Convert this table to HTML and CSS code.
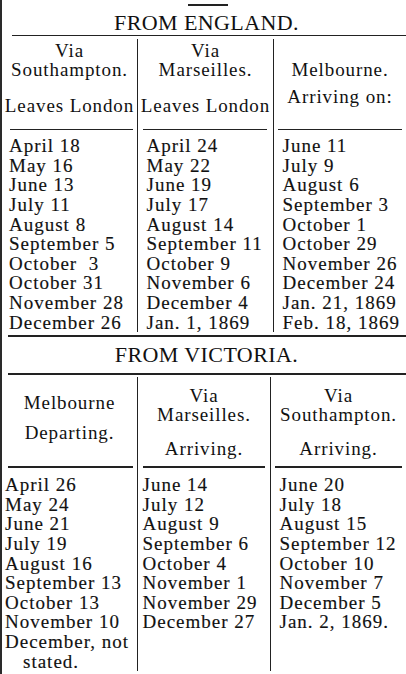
FILE: index.html
```html
<!DOCTYPE html>
<html lang="en">
<head>
<meta charset="utf-8">
<title>Mail Table 1868</title>
<link rel="stylesheet" href="styles.css">
</head>
<body>
<div class="page">
  <div class="cutoff"></div>
  <h2 class="title title-eng">FROM ENGLAND.</h2>
  <div class="rule rule-a"></div>
  <div class="table table-eng">
    <div class="col c1">
      <div class="head">
        <div class="hl pt2">Via</div>
        <div class="hl">Southampton.</div>
        <div class="hl gap17">Leaves London</div>
      </div>
      <div class="seg"></div>
      <ul class="dates">
        <li>April 18</li><li>May 16</li><li>June 13</li><li>July 11</li><li>August 8</li>
        <li>September 5</li><li>October &nbsp;3</li><li>October 31</li><li>November 28</li><li>December 26</li>
      </ul>
    </div>
    <div class="col c2">
      <div class="head">
        <div class="hl pt2">Via</div>
        <div class="hl">Marseilles.</div>
        <div class="hl gap17">Leaves London</div>
      </div>
      <div class="seg"></div>
      <ul class="dates">
        <li>April 24</li><li>May 22</li><li>June 19</li><li>July 17</li><li>August 14</li>
        <li>September 11</li><li>October 9</li><li>November 6</li><li>December 4</li><li>Jan. 1, 1869</li>
      </ul>
    </div>
    <div class="col c3">
      <div class="head">
        <div class="hl pt21">Melbourne.</div>
        <div class="hl gap8">Arriving on:</div>
      </div>
      <div class="seg"></div>
      <ul class="dates">
        <li>June 11</li><li>July 9</li><li>August 6</li><li>September 3</li><li>October 1</li>
        <li>October 29</li><li>November 26</li><li>December 24</li><li>Jan. 21, 1869</li><li>Feb. 18, 1869</li>
      </ul>
    </div>
  </div>
  <div class="rule rule-b"></div>
  <h2 class="title title-vic">FROM VICTORIA.</h2>
  <div class="rule rule-c"></div>
  <div class="table table-vic">
    <div class="col c1">
      <div class="head">
        <div class="hl pt16">Melbourne</div>
        <div class="hl gap11">Departing.</div>
      </div>
      <div class="seg"></div>
      <ul class="dates">
        <li>April 26</li><li>May 24</li><li>June 21</li><li>July 19</li><li>August 16</li>
        <li>September 13</li><li>October 13</li><li>November 10</li><li>December, not</li><li class="indent">stated.</li>
      </ul>
    </div>
    <div class="col c2">
      <div class="head">
        <div class="hl pt9">Via</div>
        <div class="hl">Marseilles.</div>
        <div class="hl gap15">Arriving.</div>
      </div>
      <div class="seg"></div>
      <ul class="dates">
        <li>June 14</li><li>July 12</li><li>August 9</li><li>September 6</li><li>October 4</li>
        <li>November 1</li><li>November 29</li><li>December 27</li>
      </ul>
    </div>
    <div class="col c3">
      <div class="head">
        <div class="hl pt9">Via</div>
        <div class="hl">Southampton.</div>
        <div class="hl gap15">Arriving.</div>
      </div>
      <div class="seg"></div>
      <ul class="dates">
        <li>June 20</li><li>July 18</li><li>August 15</li><li>September 12</li><li>October 10</li>
        <li>November 7</li><li>December 5</li><li>Jan. 2, 1869.</li>
      </ul>
    </div>
  </div>
</div>
</body>
</html>
```
FILE: styles.css
```css
html, body {
  margin: 0;
  padding: 0;
  background: #ffffff;
}

.page {
  width: 404px;
  height: 674px;
  overflow: hidden;
  border-left: 2px solid #2a2a2a;
  font-family: "Liberation Serif", "Times New Roman", serif;
  color: #111;
}

.cutoff {
  width: 40px;
  height: 1.5px;
  background: #222;
  margin: 4px 0 0 186px;
}

.title {
  margin: 5px 0 0;
  padding-left: 5px;
  font-size: 22px;
  line-height: 24px;
  font-weight: normal;
  letter-spacing: 0.4px;
  text-align: center;
}

.title-vic {
  margin-top: 6px;
}

.rule {
  height: 1.5px;
  background: #222;
}

.rule-a { margin-left: 10px; }
.rule-b { margin: 3px 0 0 6px; }
.rule-c { margin: 6.5px 0 0 6px; }

.table {
  display: grid;
  margin-top: 2.5px;
}

.table-eng { grid-template-columns: 135px 136px 133px; }
.table-vic { grid-template-columns: 135px 133px 136px; }

.col + .col {
  border-left: 1.5px solid #222;
}

.head {
  box-sizing: border-box;
  height: 90px;
}

.table-vic .head { height: 89px; }

.hl {
  font-size: 19px;
  line-height: 19px;
  letter-spacing: 0.9px;
  text-align: center;
  white-space: nowrap;
}

.pt2 { padding-top: 2px; }
.pt9 { padding-top: 9px; }
.pt16 { padding-top: 16px; }
.pt21 { padding-top: 21px; }
.gap8 { margin-top: 8px; }
.gap11 { margin-top: 11px; }
.gap15 { margin-top: 15px; }
.gap17 { margin-top: 17px; }

.seg {
  height: 1.5px;
  background: #222;
}

.table-eng .c1 .seg { margin: 0 4px 0 8px; }
.table-eng .c2 .seg { margin: 0 6px 0 5px; }
.table-eng .c3 .seg { margin: 0 4px 0 4px; }
.table-vic .c1 .seg { margin: 0 4px 0 6px; }
.table-vic .c2 .seg { margin: 0 5px 0 5px; }
.table-vic .c3 .seg { margin: 0 4px 0 4px; }

.dates {
  list-style: none;
  margin: 6.3px 0 0;
  padding: 0;
  font-size: 19px;
  line-height: 19.6px;
  letter-spacing: 1px;
  white-space: nowrap;
  -webkit-text-stroke: 0.15px #111;
}

.table-vic .dates { margin-top: 7.5px; }

.table-eng .c1 .dates { padding-left: 7px; }
.table-eng .c2 .dates { padding-left: 8.5px; }
.table-eng .c3 .dates { padding-left: 8.5px; }
.table-vic .c1 .dates { padding-left: 3px; }
.table-vic .c2 .dates { padding-left: 4.5px; }
.table-vic .c3 .dates { padding-left: 8.5px; }

.indent { padding-left: 18px; }
```
